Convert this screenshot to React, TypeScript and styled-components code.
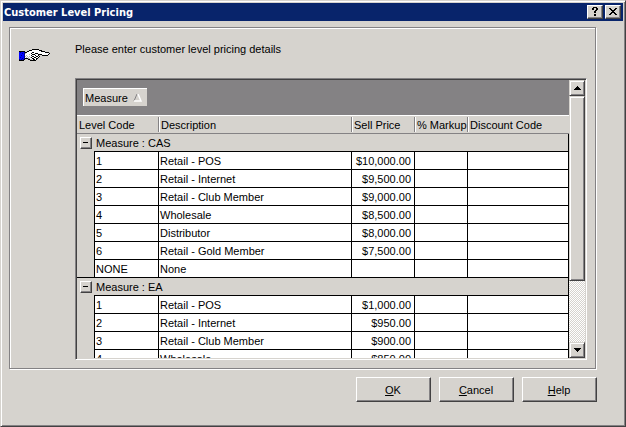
import React from "react";
import styled, { createGlobalStyle, css } from "styled-components";

const face = "#d6d3ce";
const shade = "#848284";
const dark = "#424142";

const GlobalStyle = createGlobalStyle`
  * { box-sizing: border-box; }
  body {
    margin: 0;
    background: ${face};
    color: #000;
    font: 11px/16px "Liberation Sans", Arial, sans-serif;
  }
  button { font: inherit; color: inherit; }
`;

const raised = css`
  background: ${face};
  border: 1px solid;
  border-color: #fff ${dark} ${dark} #fff;
  box-shadow: inset -1px -1px ${shade};
`;

const Dialog = styled.main`
  display: flex;
  flex-direction: column;
  height: 100vh;
  border: 1px solid;
  border-color: ${face} ${dark} ${dark} ${face};
  box-shadow: inset 1px 1px #fff, inset -1px -1px ${shade};
  padding: 2px;
`;

const TitleBar = styled.header`
  display: flex;
  align-items: center;
  flex: none;
  height: 18px;
  padding: 0 2px 0 1px;
  background: #08246b;
`;

const Title = styled.h1`
  flex: 1;
  margin: 0;
  padding-top: 2px;
  color: #fff;
  font: bold 11px/16px "DejaVu Sans Condensed", "DejaVu Sans", sans-serif;
`;

const CaptionButton = styled.button`
  ${raised}
  display: flex;
  align-items: center;
  justify-content: center;
  width: 16px;
  height: 14px;
  margin-left: 2px;
  padding: 0 1px 1px 0;
`;

const Content = styled.div`
  display: flex;
  flex-direction: column;
  flex: 1;
  min-height: 0;
  padding: 6px 26px 22px 6px;
`;

const GroupBox = styled.section`
  display: flex;
  flex: 1;
  min-height: 0;
  border: 1px solid ${shade};
  box-shadow: inset 1px 1px #fff, 1px 1px #fff;
  padding: 12px 8px 8px 9px;
  margin-right: 1px;
`;

const IconColumn = styled.div`
  flex: none;
  width: 56px;
  padding-top: 9px;
`;

const Body = styled.div`
  display: flex;
  flex-direction: column;
  flex: 1;
  min-width: 0;
`;

const Prompt = styled.p`
  margin: 0 0 21px;
  padding-top: 1px;
`;

const Grid = styled.div`
  display: flex;
  flex: 1;
  min-height: 0;
  border: 1px solid;
  border-color: ${shade} #fff #fff ${shade};
  box-shadow: inset 1px 1px ${dark}, inset -1px -1px ${face};
  padding: 1px;
`;

const View = styled.div`
  flex: 1;
  min-width: 0;
  overflow: hidden;
`;

const GroupPanel = styled.div`
  height: 35px;
  padding: 8px 6px;
  background: ${shade};
`;

const GroupChip = styled.button`
  display: flex;
  align-items: center;
  gap: 5px;
  height: 18px;
  padding: 2px 5px 0 2px;
  background: ${face};
  border: 0;
  box-shadow: inset 1px 1px #fff;
`;

const Table = styled.table`
  width: 100%;
  table-layout: fixed;
  border-spacing: 0;
`;

const Col = styled.col<{ $w?: number }>`
  width: ${(p) => (p.$w ? `${p.$w}px` : "auto")};
`;

const HeadCell = styled.th`
  height: 19px;
  padding: 1px 0 0;
  border-top: 1px solid #fff;
  border-bottom: 1px solid ${shade};
  font-weight: normal;
  text-align: left;
`;

const HeadLabel = styled.span<{ $first?: boolean }>`
  display: block;
  height: 15px;
  margin-bottom: 1px;
  padding-left: 2px;
  overflow: hidden;
  white-space: nowrap;
  line-height: 17px;
  ${(p) =>
    !p.$first &&
    css`
      border-left: 1px solid ${shade};
      box-shadow: inset 1px 0 #fff;
    `}
`;

const Indent = styled.td<{ $last?: boolean }>`
  height: 18px;
  padding: 0 0 0 3px;
  border-bottom: 1px solid ${(p) => (p.$last ? "#000" : face)};
`;

const GroupCell = styled.th`
  height: 18px;
  padding: 1px 0 0 2px;
  border-bottom: 1px solid #000;
  border-right: 1px solid #000;
  font-weight: normal;
  line-height: 16px;
  text-align: left;
`;

const Cell = styled.td<{ $numeric?: boolean }>`
  height: 18px;
  padding: 1px 3px 0 1px;
  background: #fff;
  border-left: 1px solid #000;
  border-bottom: 1px solid #000;
  line-height: 16px;
  white-space: nowrap;
  text-align: ${(p) => (p.$numeric ? "right" : "left")};
  &:last-child { border-right: 1px solid #000; }
`;

const Expander = styled.button`
  ${raised}
  display: flex;
  align-items: center;
  justify-content: center;
  width: 12px;
  height: 12px;
  padding: 0 1px 1px 0;
`;

const ScrollBar = styled.div`
  display: flex;
  flex-direction: column;
  flex: none;
  width: 16px;
  background: repeating-conic-gradient(#fff 0 25%, ${face} 0 50%) 0 0 / 2px 2px;
`;

const scrollPart = css`
  background: ${face};
  border: 1px solid;
  border-color: ${face} ${dark} ${dark} ${face};
  box-shadow: inset 1px 1px #fff, inset -1px -1px ${shade};
`;

const ScrollButton = styled.button`
  ${scrollPart}
  display: flex;
  align-items: center;
  justify-content: center;
  flex: none;
  height: 16px;
  padding: 0;
`;

const ScrollTrack = styled.div`
  flex: 1;
`;

const ScrollThumb = styled.div`
  ${scrollPart}
  height: 75%;
`;

const Actions = styled.footer`
  display: flex;
  flex: none;
  justify-content: flex-end;
  gap: 8px;
  padding-top: 8px;
`;

const ActionButton = styled.button`
  ${raised}
  width: 75px;
  height: 25px;
  padding: 0 1px 0 0;
`;

const handRows = [
  ".............KKKKKKK............",
  "..........KKKWWWWWWWKKK.........",
  "KKKKKK..KKWWWWWWWWWWWWKKKK......",
  "BNBBBNKKWWWWWKKWWWWWWWWWWWKKKK..",
  "BBBNBNGWWWWWKWWWKKKWWWWWWWWWWWK.",
  "BBBBBNWWWWGWWKKKWWWKKKKWWWWWWK..",
  "BBNBBNWGWWWWKWWWKWWK...KKKKKK...",
  "BBBBBNGWGWGWWKKWWKKWK...........",
  "BNBBBNWGWGWGKWWKKWWK............",
  "BBBNBNKKKGGWWKKWWKK.............",
  "NBNBNK...KKGGWKKWK..............",
  "KKKKK......KKKKKK...............",
];
const ink: Record<string, string> = { K: "#000", W: "#fff", B: "#0000ff", N: "#000084", G: "#b5b2b5" };

const Hand = () => (
  <svg width="32" height="12" viewBox="0 0 32 12" shapeRendering="crispEdges" aria-hidden="true" display="block">
    {handRows.flatMap((row, y) =>
      [...row].map((c, x) => (c === "." ? null : <rect key={`${x}-${y}`} x={x} y={y} width="1" height="1" fill={ink[c]} />)),
    )}
  </svg>
);

const Arrow = ({ down }: { down?: boolean }) => (
  <svg width="7" height="4" viewBox="0 0 7 4" shapeRendering="crispEdges" aria-hidden="true">
    <path d={down ? "M0 0h7v1H0zM1 1h5v1H1zM2 2h3v1H2zM3 3h1v1H3z" : "M3 0h1v1H3zM2 1h3v1H2zM1 2h5v1H1zM0 3h7v1H0z"} />
  </svg>
);

type Item = [code: string, description: string, price: string];

const groups: { name: string; items: Item[] }[] = [
  {
    name: "CAS",
    items: [
      ["1", "Retail - POS", "$10,000.00"],
      ["2", "Retail - Internet", "$9,500.00"],
      ["3", "Retail - Club Member", "$9,000.00"],
      ["4", "Wholesale", "$8,500.00"],
      ["5", "Distributor", "$8,000.00"],
      ["6", "Retail - Gold Member", "$7,500.00"],
      ["NONE", "None", ""],
    ],
  },
  {
    name: "EA",
    items: [
      ["1", "Retail - POS", "$1,000.00"],
      ["2", "Retail - Internet", "$950.00"],
      ["3", "Retail - Club Member", "$900.00"],
      ["4", "Wholesale", "$850.00"],
    ],
  },
];

const columns = ["Description", "Sell Price", "% Markup", "Discount Code"];

export default function App() {
  return (
    <>
      <GlobalStyle />
      <Dialog>
        <TitleBar>
          <Title>Customer Level Pricing</Title>
          <CaptionButton aria-label="Help">
            <svg width="6" height="9" viewBox="0 0 6 9" shapeRendering="crispEdges">
              <path d="M1 0h4v1H1zM0 1h2v2H0zM4 1h2v2H4zM3 3h2v1H3zM2 4h2v2H2zM2 7h2v2H2z" />
            </svg>
          </CaptionButton>
          <CaptionButton aria-label="Close">
            <svg width="8" height="7" viewBox="0 0 8 7" shapeRendering="crispEdges">
              <path d="M0 0h2v1H0zM6 0h2v1H6zM1 1h2v1H1zM5 1h2v1H5zM2 2h4v1H2zM3 3h2v1H3zM2 4h4v1H2zM1 5h2v1H1zM5 5h2v1H5zM0 6h2v1H0zM6 6h2v1H6z" />
            </svg>
          </CaptionButton>
        </TitleBar>
        <Content>
          <GroupBox>
            <IconColumn>
              <Hand />
            </IconColumn>
            <Body>
              <Prompt>Please enter customer level pricing details</Prompt>
              <Grid>
                <View>
                  <GroupPanel>
                    <GroupChip>
                      Measure
                      <svg width="9" height="8" viewBox="0 0 9 8" fill="none" aria-hidden="true">
                        <path d="M4 0L1 7" stroke={shade} />
                        <path d="M5 0L8 7H1" stroke="#fff" strokeWidth="1.5" />
                      </svg>
                    </GroupChip>
                  </GroupPanel>
                  <Table>
                    <colgroup>
                      <Col $w={17} />
                      <Col $w={64} />
                      <Col />
                      <Col $w={63} />
                      <Col $w={53} />
                      <Col $w={102} />
                    </colgroup>
                    <thead>
                      <tr>
                        <HeadCell colSpan={2}>
                          <HeadLabel $first>Level Code</HeadLabel>
                        </HeadCell>
                        {columns.map((c) => (
                          <HeadCell key={c}>
                            <HeadLabel>{c}</HeadLabel>
                          </HeadCell>
                        ))}
                      </tr>
                    </thead>
                    {groups.map((g) => (
                      <tbody key={g.name}>
                        <tr>
                          <Indent>
                            <Expander aria-label={`Collapse ${g.name}`}>
                              <svg width="5" height="1" viewBox="0 0 5 1" display="block">
                                <path d="M0 0h5v1H0z" />
                              </svg>
                            </Expander>
                          </Indent>
                          <GroupCell colSpan={5}>Measure : {g.name}</GroupCell>
                        </tr>
                        {g.items.map(([code, description, price], i) => (
                          <tr key={code}>
                            <Indent $last={i === g.items.length - 1} />
                            <Cell>{code}</Cell>
                            <Cell>{description}</Cell>
                            <Cell $numeric>{price}</Cell>
                            <Cell />
                            <Cell />
                          </tr>
                        ))}
                      </tbody>
                    ))}
                  </Table>
                </View>
                <ScrollBar>
                  <ScrollButton aria-label="Scroll up">
                    <Arrow />
                  </ScrollButton>
                  <ScrollTrack>
                    <ScrollThumb />
                  </ScrollTrack>
                  <ScrollButton aria-label="Scroll down">
                    <Arrow down />
                  </ScrollButton>
                </ScrollBar>
              </Grid>
            </Body>
          </GroupBox>
          <Actions>
            <ActionButton>
              <u>O</u>K
            </ActionButton>
            <ActionButton>
              <u>C</u>ancel
            </ActionButton>
            <ActionButton>
              <u>H</u>elp
            </ActionButton>
          </Actions>
        </Content>
      </Dialog>
    </>
  );
}
